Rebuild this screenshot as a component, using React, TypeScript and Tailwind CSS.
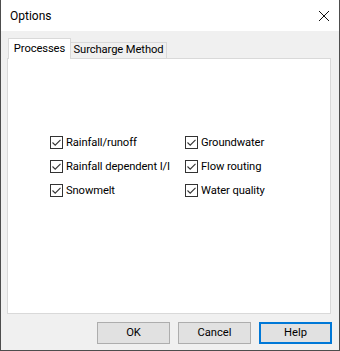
const font = { fontFamily: 'Roboto, "Noto Sans", sans-serif' };

function CheckBox({ label }: { label: string }) {
  return (
    <div className="flex items-center h-[13px] gap-[3px]">
      <div className="w-[13px] h-[13px] border border-[#333333] bg-white flex items-center justify-center">
        <svg width="11" height="11" viewBox="0 0 11 11">
          <path d="M1.5 5.5 L4.2 8.2 L9.5 2.8" fill="none" stroke="#333333" strokeWidth="1.1" />
        </svg>
      </div>
      <span className="text-[11.2px] tracking-[-0.1px] leading-none text-black whitespace-nowrap">{label}</span>
    </div>
  );
}

function DialogButton({ label, focused }: { label: string; focused?: boolean }) {
  return (
    <button
      className={
        focused
          ? "w-[73px] h-[22px] bg-[#e1e1e1] border-2 border-[#0078d7] text-[11.2px] text-black"
          : "w-[73px] h-[22px] bg-[#e1e1e1] border border-[#adadad] text-[11.2px] text-black"
      }
    >
      {label}
    </button>
  );
}

export default function App() {
  return (
    <div
      className="w-[340px] h-[351px] flex flex-col bg-[#f0f0f0] border-x border-b border-[#4d4d4d]"
      style={font}
    >
      {/* Title bar */}
      <div className="h-[31px] bg-white flex items-center justify-between pl-[9px] pr-[9px]">
        <span className="text-[12px] text-black">Options</span>
        <svg width="12" height="12" viewBox="0 0 12 12">
          <path d="M1 1 L11 11 M11 1 L1 11" stroke="#111111" strokeWidth="1" />
        </svg>
      </div>

      <div className="flex-1 flex flex-col pl-[6px] pr-[8px] pt-[7px]">
        {/* Tabs */}
        <div className="flex items-end h-[21px] pl-[1px] relative z-10">
          <div className="h-[21px] w-[63px] shrink-0 bg-white border border-b-0 border-[#d9d9d9] flex items-center justify-center text-[11.2px] tracking-[-0.1px] text-black whitespace-nowrap">
            Processes
          </div>
          <div className="h-[17px] w-[96px] shrink-0 border border-l-0 border-[#d9d9d9] flex items-center justify-center text-[11.2px] tracking-[-0.1px] text-black whitespace-nowrap">
            Surcharge Method
          </div>
        </div>

        {/* Panel */}
        <div className="h-[256px] -mt-px bg-white border border-[#d9d9d9] pl-[42px] pt-[77px]">
          <div className="grid grid-cols-[135px_1fr] gap-y-[11px]">
            <CheckBox label="Rainfall/runoff" />
            <CheckBox label="Groundwater" />
            <CheckBox label="Rainfall dependent I/I" />
            <CheckBox label="Flow routing" />
            <CheckBox label="Snowmelt" />
            <CheckBox label="Water quality" />
          </div>
        </div>

        {/* Buttons */}
        <div className="flex justify-end gap-[8px] pt-[8px] -mr-px">
          <DialogButton label="OK" />
          <DialogButton label="Cancel" />
          <DialogButton label="Help" focused />
        </div>
      </div>
    </div>
  );
}
